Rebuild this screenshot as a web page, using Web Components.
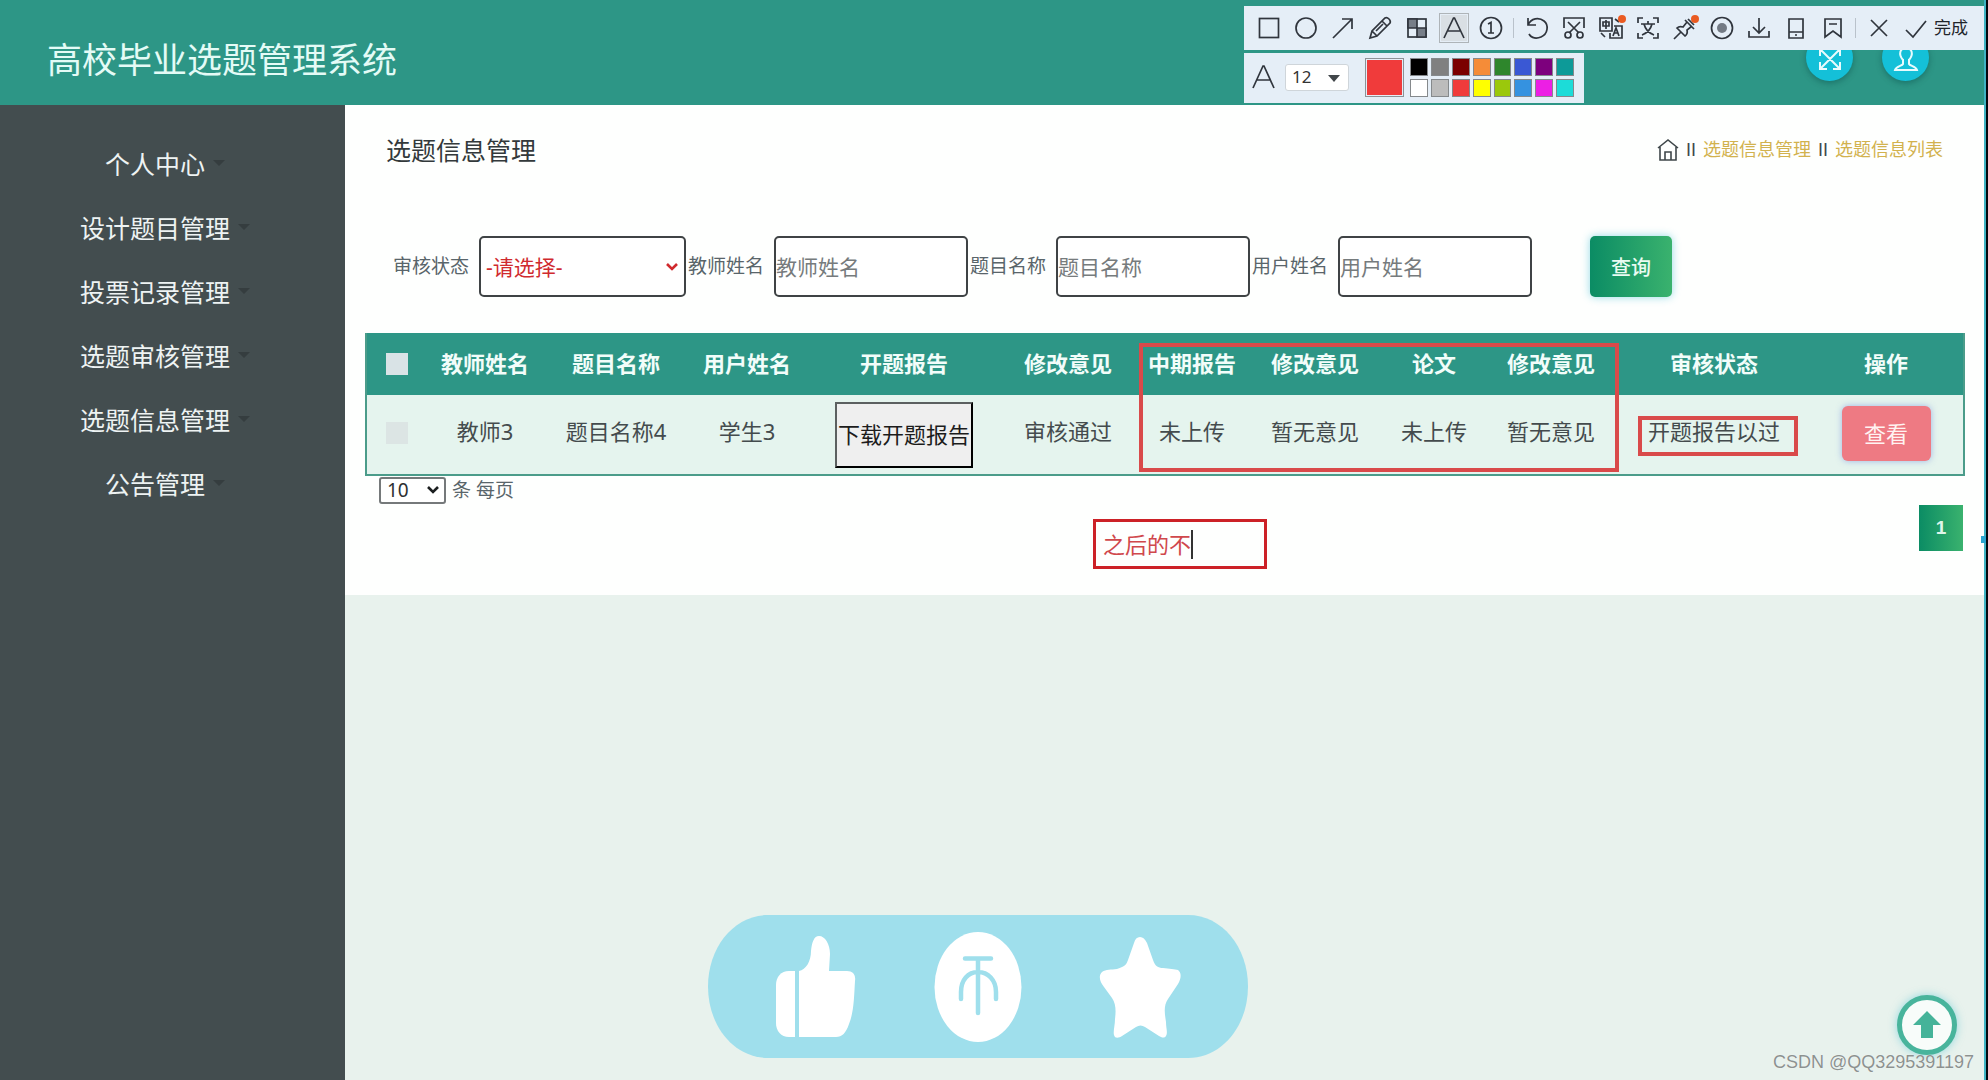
<!DOCTYPE html>
<html lang="zh-CN">
<head>
<meta charset="utf-8">
<title>高校毕业选题管理系统</title>
<style>
html,body{margin:0;height:100%}
body{font-family:"Noto Sans","Noto Sans CJK SC",sans-serif;background:#e8f2ed;color:#3c4446}
</style>
</head>
<body>
<topic-app></topic-app>
<script>
function define(name, html, init) {
  const t = document.createElement('template');
  t.innerHTML = html;
  customElements.define(name, class extends HTMLElement {
    constructor() {
      super();
      this.attachShadow({ mode: 'open' }).append(t.content.cloneNode(true));
    }
    connectedCallback() { if (init) init(this, this.shadowRoot); }
  });
}

/* chevron drawn at the right edge of a select */
function chevron(color) {
  return `url("data:image/svg+xml,%3Csvg xmlns='http://www.w3.org/2000/svg' width='14' height='10' viewBox='0 0 14 10'%3E%3Cpath d='M2 2l5 5 5-5' fill='none' stroke='%23${color}' stroke-width='2.600'/%3E%3C/svg%3E") no-repeat`;
}

/* ---------- header ---------- */
define('app-header', `
<style>
:host{display:flex;align-items:center;justify-content:space-between;height:105px;padding:0 55px 0 47px;background:#2d9686;box-sizing:border-box}
h1{margin:0;padding-top:14px;font-size:35px;line-height:48px;font-weight:400;color:#e4fbf6}
nav{display:flex;gap:29px;padding-top:9px}
button{width:47px;height:47px;border:0;border-radius:50%;padding:4px 0 0;background:#14c0d8;box-shadow:0 2px 6px rgba(0,60,60,.4);display:grid;place-items:center}
svg{width:26px;height:26px;fill:none;stroke:#e8fbfd;stroke-width:2}
</style>
<h1>高校毕业选题管理系统</h1>
<nav>
<button aria-label="全屏"><svg viewBox="0 0 26 26"><path d="M4 4 22 22M22 4 4 22M3 10V3h7M16 3h7v7M3 16v7h7M23 16v7h-7"/></svg></button>
<button aria-label="用户"><svg viewBox="0 0 26 26"><path d="M10 14C5 8 7 2 13 2s8 6 3 12M10 13v5c-1 2-7 2-8 6h22c-1-4-7-4-8-6v-5"/></svg></button>
</nav>`);

/* ---------- sidebar ---------- */
define('side-item', `
<style>
:host{display:block}
a{display:flex;align-items:center;justify-content:center;gap:8px;height:64px;color:#eef3f3;font-size:25px;line-height:36px;text-decoration:none}
a::after{content:"";border:6px solid transparent;border-top:6px solid #353d3f;border-bottom:0;margin-top:-2px}
</style><a href="#"><slot></slot></a>`);

define('app-sidebar', `
<style>
:host{display:block;flex:0 0 345px;background:#434d4f;padding:27px 15px 0 0;box-sizing:border-box}
</style>
<nav><side-item>个人中心</side-item><side-item>设计题目管理</side-item><side-item>投票记录管理</side-item><side-item>选题审核管理</side-item><side-item>选题信息管理</side-item><side-item>公告管理</side-item></nav>`);

/* ---------- title row ---------- */
define('page-title', `
<style>
:host{display:flex;justify-content:space-between;align-items:center;height:90px;padding:0 41px}
h2{margin:0;font-size:25px;line-height:36px;font-weight:400;color:#33393b}
nav{display:flex;align-items:center;gap:7px;font-size:18px;line-height:26px;color:#3f474a;font-family:"Liberation Sans","Noto Sans CJK SC",sans-serif}
a{color:#d2b24e;text-decoration:none}
svg{width:22px;height:24px;fill:none;stroke:#3f474a;stroke-width:1.6;display:block}
</style>
<h2>选题信息管理</h2>
<nav><a href="#" aria-label="首页"><svg viewBox="0 0 22 24"><path d="M1 10 11 2l10 8M3 9v13h16V9M8 22v-8h6v8"/></svg></a><span>II</span><a href="#">选题信息管理</a><span>II</span><a href="#">选题信息列表</a></nav>`);

/* ---------- search ---------- */
define('search-field', `
<style>
:host{display:flex;align-items:center;gap:10px}
label{font-size:19px;line-height:28px;color:#59656a;white-space:nowrap;padding-bottom:2px}
input,select{box-sizing:border-box;height:61px;border:2px solid #3f4345;border-radius:5px;background:#fff;font:21px/30px "Noto Sans","Noto Sans CJK SC",sans-serif;padding:0}
input{width:194px}
input::placeholder{color:#767b7d;opacity:1}
select{width:207px;color:#d02a2e;padding-left:5px;appearance:none;background:#fff ${chevron('d02a2e')} right 5px center}
</style><label for="f"></label>`, (host, root) => {
  if (root.getElementById('f')) return;
  const text = host.getAttribute('label');
  root.querySelector('label').textContent = text;
  let f;
  if (host.hasAttribute('options')) {
    f = document.createElement('select');
    f.append(new Option(host.getAttribute('options')));
  } else {
    f = document.createElement('input');
    f.placeholder = text;
  }
  f.id = 'f';
  root.append(f);
});

define('search-bar', `
<style>
:host{display:block}
form{display:flex;align-items:center;gap:2px;padding:41px 27px 36px 48px}
button{width:82px;height:61px;margin-left:56px;border:0;border-radius:5px;background:linear-gradient(90deg,#0b8c64,#3ab26e);box-shadow:0 0 8px rgba(20,170,200,.45);color:#e9fbf2;font:500 20px/28px "Noto Sans CJK SC",sans-serif}
</style>
<form><search-field label="审核状态" options="-请选择-"></search-field><search-field label="教师姓名"></search-field><search-field label="题目名称"></search-field><search-field label="用户姓名"></search-field><button type="button">查询</button></form>`);

/* ---------- table ---------- */
define('topic-table', `
<style>
:host{display:block;margin:0 19px 0 20px}
table{width:100%;table-layout:fixed;border-collapse:separate;border-spacing:0;border:2px solid #4b9c8a;border-top:0;box-sizing:border-box;font-size:22px;line-height:32px;color:#444b4d;text-align:center}
th,td{padding:0;white-space:nowrap}
th{height:62px;background:#2d9686;color:#f2fdfa;font-weight:700;padding-bottom:3px;box-sizing:border-box}
td{height:79px;background:#e5f4ee}
td span{display:block;padding-bottom:8px}
input{appearance:none;display:block;width:22px;height:22px;margin:2px 0 0 19px;background:#d9e3e6}
td input{background:#dce5e4;margin-top:0;margin-bottom:4px}
button{font:22px/32px "Noto Sans CJK SC",sans-serif;padding:0 0 4px;vertical-align:middle}
.dl{width:138px;height:66px;border:2px outset #333;border-color:#5c6060 #222 #222 #5c6060;background:#efefef;color:#1c1c1c}
.view{width:89px;height:55px;margin-bottom:2px;border:0;border-radius:6px;background:#ee7a83;color:#fff3f2;box-shadow:0 0 6px rgba(90,120,220,.5)}
</style>
<table>
<colgroup><col style="width:54px"><col style="width:128px"><col style="width:134px"><col style="width:128px"><col style="width:186px"><col style="width:142px"><col style="width:106px"><col style="width:140px"><col style="width:98px"><col style="width:136px"><col style="width:190px"><col style="width:154px"></colgroup>
<thead><tr><th><input type="checkbox" aria-label="全选"></th><th>教师姓名</th><th>题目名称</th><th>用户姓名</th><th>开题报告</th><th>修改意见</th><th>中期报告</th><th>修改意见</th><th>论文</th><th>修改意见</th><th>审核状态</th><th>操作</th></tr></thead>
<tbody><tr><td><input type="checkbox" aria-label="选择"></td><td><span>教师3</span></td><td><span>题目名称4</span></td><td><span>学生3</span></td><td><button class="dl">下载开题报告</button></td><td><span>审核通过</span></td><td><span>未上传</span></td><td><span>暂无意见</span></td><td><span>未上传</span></td><td><span>暂无意见</span></td><td><span>开题报告以过</span></td><td><button class="view">查看</button></td></tr></tbody>
</table>`);

/* ---------- pager ---------- */
define('table-pager', `
<style>
:host{display:flex;justify-content:space-between;align-items:flex-start;padding:0 21px 0 34px}
div{display:flex;align-items:center;gap:6px;font-size:19px;line-height:28px;color:#59656a}
select{width:67px;height:27px;box-sizing:border-box;border:2px solid #75797a;border-radius:3px;color:#2d3031;font:19px/22px "Noto Sans",sans-serif;padding:0 0 1px 6px;appearance:none;background:#fff ${chevron('1c1f20')} right 4px center}
button{width:44px;height:46px;margin-top:29px;border:0;padding:0;background:linear-gradient(90deg,#0b8c64,#3ab26e);color:#dff6ea;font:bold 19px/24px "Liberation Sans",sans-serif}
</style>
<div><select id="n"><option>10</option></select><label for="n">条 每页</label></div><button>1</button>`);

/* ---------- drawn annotations ---------- */
define('mark-layer', `
<style>
:host{position:absolute;inset:0;pointer-events:none}
i,div{position:absolute;box-sizing:border-box;border:4px solid #d94a4a}
.cols{left:794px;top:238px;width:480px;height:129px}
.state{left:1293px;top:311px;width:160px;height:40px}
div{left:748px;top:414px;width:174px;height:50px;border:3px solid #cc2127;display:flex;align-items:center;padding-left:7px}
input{width:88px;height:32px;padding:0 0 3px;border:0;background:none;color:#d0484c;font:22px/28px "Noto Sans CJK SC",sans-serif;box-sizing:border-box}
b{width:2px;height:29px;background:#333}
</style>
<i class="cols"></i><i class="state"></i><div><input aria-label="批注" value="之后的不"><b></b></div>`);

/* ---------- capture toolbar ---------- */
define('capture-bar', `
<style>
:host{position:absolute;top:6px;right:2px;width:740px}
.row{display:flex;align-items:center;background:#e5eef7;box-sizing:border-box}
.tools{height:44px;padding-left:6px}
button{width:37px;height:32px;border:0;padding:0;background:none;display:grid;place-items:center;flex:none}
svg{width:26px;height:26px;fill:none;stroke:#30353d;stroke-width:1.7;overflow:visible}
.on svg{background:#d9dfe4;outline:1px solid #aeb4b8;outline-offset:1px}
hr{width:1px;height:20px;border:0;margin:0 4px;background:#b9c2cb}
.done{width:auto;font:17px/24px "Noto Sans CJK SC",sans-serif;color:#1f252b;padding-bottom:2px}
.opts{height:50px;width:340px;margin-top:3px;padding:0 10px 2px 7px}
select{width:64px;height:27px;margin-left:8px;box-sizing:border-box;border:1px solid #cfd5da;border-radius:3px;background:#fff;font:17px/24px "Noto Sans",sans-serif;color:#333;padding:0 0 1px 6px;appearance:none}
.sel{position:relative}
.sel::after{content:"";position:absolute;right:9px;top:11px;border:6px solid transparent;border-top:7px solid #41464a;border-bottom:0}
.big{width:39px;height:39px;margin:0 6px 0 16px;box-sizing:border-box;border:1px solid #8c9296;background:#f03b3b;box-shadow:inset 0 0 0 1px #e5eef7}
.grid{display:grid;flex:1;grid-template-columns:repeat(8,1fr);gap:3px}
.grid i{height:18px;box-sizing:border-box;border:1px solid #85898c}
.dot{fill:#ea5b22;stroke:none}
</style>
<div class="row tools"></div>
<div class="row opts"><svg viewBox="0 0 26 26"><path d="M2 24 12 2h1l10 22M6 16h14"/></svg><span class="sel"><select aria-label="字号"><option>12</option></select></span><span class="big"></span><div class="grid"></div></div>`, (host, root) => {
  const icons = [
    ['矩形', '<rect x="3.500" y="3.500" width="19" height="19"/>'],
    ['椭圆', '<circle cx="13" cy="13" r="10"/>'],
    ['箭头', '<path d="M3 23 22 4M12 4h10v10"/>'],
    ['画笔', '<path d="m3 23 2-7L18 3q2-1 4 1t1 4L10 21zM5 16l5 5M15 6l5 5M9 16l7-7"/>'],
    ['马赛克', '<rect x="4" y="4" width="18" height="18"/><path d="M4 4h9v9H4z" fill="#777e88"/><path d="M13 13h9v9h-9z" fill="#777e88"/>'],
    ['文字', '<path d="M3 23 12.500 3h1L23 23M7 16h12"/>', 'on'],
    ['序号', '<circle cx="13" cy="13" r="10.500"/><path d="M10 9l3-1.500V18M10 18h6"/>'],
    null,
    ['撤销', '<path d="M4 3v7h8M4 10C7 3 15 2 20 6s4 13-3 16-11-1-12-3"/>'],
    ['截断', '<path d="M3 13V3h20v10M7 7l11 11M19 7 8 18"/><circle cx="7" cy="20" r="3"/><circle cx="19" cy="20" r="3"/>'],
    ['翻译', '<path d="M2 3h12v13H2zM5 7h6v4H5zM8 5v9M16 11h8v12H12v-5M15 21l3-8 3 8M16 18h4M3 18l4 4M17 4l4 3"/><circle class="dot" cx="24" cy="4" r="4"/>'],
    ['识别', '<path d="M3 8V3h5M18 3h5v5M23 18v5h-5M8 23H3v-5M6 9h14M13 6v3M17 9q-2 8-10 11M9 9q2 8 10 11"/>'],
    ['钉住', '<path d="m13 5 9 9M15 7l-4 5q-4-1-6 1l8 8q3-2 2-6l5-4M9 17l-7 7M16 4l6 6"/><circle class="dot" cx="23" cy="4" r="4"/>'],
    ['录制', '<circle cx="13" cy="13" r="10.500"/><circle cx="13" cy="13" r="5" fill="#737a84" stroke="none"/>'],
    ['保存', '<path d="M13 3v15M7 12l6 6 6-6M3 16v6h20v-6"/>'],
    ['手机', '<path d="M6 4h14v19H6zM6 17h14M12 20h2"/>'],
    ['收藏', '<path d="M5 4h16v18l-8-6-8 6zM9 9h8"/>'],
    null,
    ['取消', '<path d="m5 5 16 16M21 5 5 21"/>'],
    ['确认', '<path d="m3 15 7 7L23 6"/>']
  ];
  root.querySelector('.tools').innerHTML = icons.map(i => i
    ? `<button class="${i[2] || ''}" aria-label="${i[0]}"><svg viewBox="0 0 26 26">${i[1]}</svg></button>`
    : '<hr>').join('') + '<button class="done">完成</button>';
  root.querySelector('.grid').innerHTML =
    ['#000', '#808080', '#7b0000', '#f58c38', '#2e862c', '#3a58d4', '#7d007d', '#0d9a98',
     '#fff', '#bcbcbc', '#f03b3b', '#ffff00', '#9bc80c', '#3592e0', '#ec1fe4', '#1cdcd8']
      .map(c => `<i style="background:${c}"></i>`).join('');
});

/* ---------- like / coin / favourite ---------- */
define('triple-bar', `
<style>
:host{position:absolute;left:calc(50% - 285px);bottom:22px;width:540px;height:143px}
svg{display:block;width:540px;height:143px}
</style>
<svg viewBox="0 0 540 143" fill="#fff">
<path fill="#9fdfec" d="M60 0H480C514 0 540 32 540 71.500S514 143 480 143H60C26 143 0 111 0 71.500S26 0 60 0z"/>
<path d="M87 56h-6c-8 0-13 6-13 14v38c0 8 5 14 13 14h6z"/>
<path d="M91 56c7-1 12-10 12-20 1-9 3-15 8-15 6 0 11 8 11 18l-1 17h18c6 0 9 4 8 10-1 16-1 31-6 43-3 9-7 13-13 13H91z"/>
<ellipse cx="270" cy="72" rx="43.500" ry="55"/>
<path fill="none" stroke="#9fdfec" stroke-width="4.500" stroke-linecap="round" d="M257 43.500h26M270 44v54M253 84V77c0-12 7-20 17-20s18 8 18 20v7"/>
<path d="M432 22c3 0 5 2 7 6l6 17c2 6 5 8 10 8 6 1 12 1 15 2 4 3 3 9 0 14l-10 15c-5 7-3 16-2 23 0 6 2 11 0 14-2 3-5 1-7 0l-14-9c-3-2-6-2-9 0l-14 9c-3 2-7 3-8-1-1-3 1-10 1-16 1-8 1-15-3-21l-8-11c-4-5-6-11-2-15 4-3 9-2 15-3 6-2 9-3 11-9l6-17c1-4 3-6 6-6z"/>
</svg>`);

define('back-top', `
<style>
:host{position:absolute;right:29px;bottom:25px}
button{display:block;width:60px;height:60px;padding:0;border:5px solid #48b49c;border-radius:50%;background:#f8fcfa;box-shadow:0 0 8px rgba(60,190,210,.5)}
svg{display:block;width:50px;height:50px}
</style><button aria-label="返回顶部"><svg viewBox="0 0 50 50"><path fill="#45b399" d="M25 11 39 25h-8v13H19V25h-8z"/></svg></button>`);

define('water-mark', `
<style>
:host{position:absolute;right:12px;bottom:6px;font:18px/24px "Liberation Sans",sans-serif;color:#8c9290;text-shadow:0 0 1px #fff}
</style><slot></slot>`);

define('topic-app', `
<style>
:host{display:flex;flex-direction:column;position:relative;min-height:100vh;overflow:hidden;box-sizing:border-box;border-right:2px solid #05080e}
.frame{flex:1;display:flex;flex-direction:column;border-right:2px solid #3fb4c4}
.body{flex:1;display:flex}
main{flex:1;min-width:0;position:relative}
section{background:#fefffe;padding-bottom:44px}
.grip{position:absolute;right:0;top:536px;width:5px;height:7px;background:#2aa5cf}
</style>
<div class="frame"><app-header></app-header>
<div class="body"><app-sidebar></app-sidebar>
<main><section><page-title></page-title><search-bar></search-bar><topic-table></topic-table><table-pager></table-pager></section><mark-layer></mark-layer></main></div></div>
<span class="grip"></span>
<triple-bar></triple-bar><back-top></back-top><water-mark>CSDN @QQ3295391197</water-mark>
<capture-bar></capture-bar>`);
</script>
</body>
</html>
